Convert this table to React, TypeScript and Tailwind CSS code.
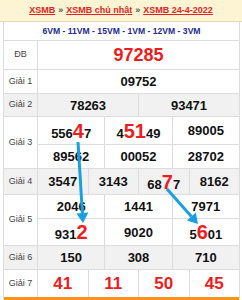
import React from "react";

const Big = (props: { children: React.ReactNode }) => (
  <span className="text-[20px] leading-none text-[#f21b1b]">{props.children}</span>
);

const Cell = (props: { children: React.ReactNode; last?: boolean; red?: boolean }) => (
  <div
    className={
      "flex-1 flex items-center justify-center " +
      (props.last ? "" : "border-r border-[#dcdcdc] ") +
      (props.red ? "text-[17px] text-[#f21b1b]" : "text-[13px] text-[#111]")
    }
  >
    <span className="leading-none">{props.children}</span>
  </div>
);

const Row = (props: { label: string; gray?: boolean; h: string; children: React.ReactNode }) => (
  <div className={"flex border-b border-[#dcdcdc] " + props.h + (props.gray ? " bg-[#f1f1f1]" : " bg-white")}>
    <div className="w-[34px] flex items-center justify-center border-r border-[#dcdcdc] text-[9px] text-[#444] font-normal">
      {props.label}
    </div>
    <div className="flex-1 flex flex-col">{props.children}</div>
  </div>
);

const Line = (props: { h: string; last?: boolean; children: React.ReactNode }) => (
  <div className={"flex " + props.h + (props.last ? "" : " border-b border-[#dcdcdc]")}>{props.children}</div>
);

export default function App() {
  return (
    <div className="relative w-[242px] h-[300px] bg-white overflow-hidden font-['Liberation_Sans',Arial,sans-serif] font-bold">
      <div className="h-[22px] bg-[#fcf4d2] border-b border-[#e6dcb0] flex items-center justify-center text-[9px] text-[#555]">
        <a className="text-[#e8231f] underline">XSMB</a>
        <span className="mx-[3px]">»</span>
        <a className="text-[#e8231f] underline">XSMB chủ nhật</a>
        <span className="mx-[3px]">»</span>
        <a className="text-[#e8231f] underline">XSMB 24-4-2022</a>
      </div>
      <div className="ml-[3px] mr-[2px] border-l border-r border-[#dcdcdc]">
        <div className="h-[19px] border-b border-[#dcdcdc] flex items-center justify-center text-[8.6px] text-[#1c2b94]">
          6VM - 11VM - 15VM - 1VM - 12VM - 3VM
        </div>
        <Row label="ĐB" h="h-[29px]">
          <Line h="flex-1" last>
            <div className="flex-1 flex items-center justify-center text-[18px] text-[#f21b1b] leading-none">97285</div>
          </Line>
        </Row>
        <Row label="Giải 1" h="h-[24px]">
          <Line h="flex-1" last>
            <Cell last>09752</Cell>
          </Line>
        </Row>
        <Row label="Giải 2" h="h-[23px]" gray>
          <Line h="flex-1" last>
            <Cell>78263</Cell>
            <Cell last>93471</Cell>
          </Line>
        </Row>
        <Row label="Giải 3" h="h-[52px]">
          <Line h="h-[28px]">
            <Cell>556<Big>4</Big>7</Cell>
            <Cell>4<Big>51</Big>49</Cell>
            <Cell last>89005</Cell>
          </Line>
          <Line h="flex-1" last>
            <Cell>89562</Cell>
            <Cell>00052</Cell>
            <Cell last>28702</Cell>
          </Line>
        </Row>
        <Row label="Giải 4" h="h-[26px]" gray>
          <Line h="flex-1" last>
            <Cell>3547</Cell>
            <Cell>3143</Cell>
            <Cell>68<Big>7</Big>7</Cell>
            <Cell last>8162</Cell>
          </Line>
        </Row>
        <Row label="Giải 5" h="h-[51px]">
          <Line h="h-[24px]">
            <Cell>2046</Cell>
            <Cell>1441</Cell>
            <Cell last>7971</Cell>
          </Line>
          <Line h="flex-1" last>
            <Cell>931<Big>2</Big></Cell>
            <Cell>9020</Cell>
            <Cell last>5<Big>6</Big>01</Cell>
          </Line>
        </Row>
        <Row label="Giải 6" h="h-[24px]" gray>
          <Line h="flex-1" last>
            <Cell>150</Cell>
            <Cell>308</Cell>
            <Cell last>710</Cell>
          </Line>
        </Row>
        <div className="flex h-[30px] border-b-[3px] border-[#f7941d]">
          <div className="w-[34px] flex items-center justify-center border-r border-[#dcdcdc] text-[9px] text-[#444] font-normal">
            Giải 7
          </div>
          <div className="flex-1 flex">
            <Cell red>41</Cell>
            <Cell red>11</Cell>
            <Cell red>50</Cell>
            <Cell red last>45</Cell>
          </div>
        </div>
      </div>

      {/* arrows drawn over the table */}
      <svg className="absolute left-0 top-0 pointer-events-none" width="242" height="300" viewBox="0 0 242 300">
        <line x1="78" y1="142" x2="82.4" y2="213" stroke="#1a9fe3" strokeWidth="3" />
        <polygon points="83,223 76.4,213.4 88.4,212.6" fill="#1a9fe3" />
        <line x1="167" y1="189" x2="191.4" y2="216.5" stroke="#1a9fe3" strokeWidth="3" />
        <polygon points="198,224 186.9,220.5 195.9,212.5" fill="#1a9fe3" />
      </svg>
    </div>
  );
}
